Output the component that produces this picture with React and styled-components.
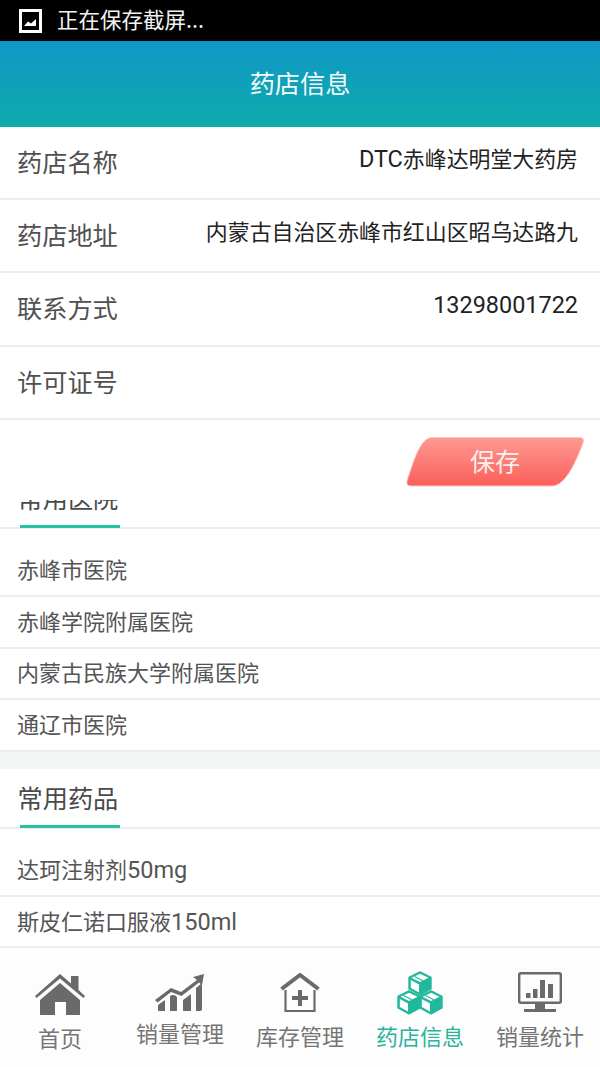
import React from "react";
import styled, { createGlobalStyle } from "styled-components";

const Global = createGlobalStyle`
  html, body { margin: 0; padding: 0; background: #fff; }
  body { font-family: "Noto Sans CJK SC", "Noto Sans", sans-serif; }
  * { box-sizing: border-box; }
`;
const Page = styled.div`
  width: 600px; height: 1067px; display: flex; flex-direction: column;
  overflow: hidden; background: #fff;
`;
const StatusBar = styled.div`
  height: 41px; flex: none; background: #000; color: #f2f2f2; display: flex;
  align-items: center; padding: 0 0 0 19px; gap: 15px; font-size: 21.5px;
  & > span { padding-bottom: 4px; }
`;
const Header = styled.header`
  height: 86px; flex: none; display: flex; align-items: center; justify-content: center;
  background: linear-gradient(180deg, #1197c6 0%, #0dabab 100%);
  color: #f4fbfb; font-size: 25.2px; padding-bottom: 4px;
`;
const Form = styled.section`flex: none; background: #fff;`;
const Row = styled.div`
  height: 73.2px; display: flex; align-items: center; justify-content: space-between;
  padding: 0 22px 0 17px; border-bottom: 2px solid #ececec;
`;
const Label = styled.span`font-size: 25.2px; color: #505050; padding-bottom: 3px;`;
const Value = styled.span`font-size: 21.9px; color: #222; padding-bottom: 11px;`;
const Latin = styled.span`font-family: Roboto, sans-serif; font-size: 1.07em;`;
const SaveBar = styled.div`
  height: 80px; flex: none; background: #fff; display: flex; justify-content: flex-end;
  padding: 17px 16px 0 0;
`;
const SaveButton = styled.button`
  position: relative; width: 178px; height: 50px; border: 0; background: none; padding: 0 0 4px;
  color: #fbeeee; font: inherit; font-size: 25px; cursor: pointer;
  & > svg { position: absolute; inset: 0; }
  & > span { position: relative; }
`;
const Scroller = styled.main`flex: 1; min-height: 0; overflow: hidden; background: #fff;`;
const Content = styled.div`margin-top: -31px;`;
const SectionTitle = styled.h2`
  margin: 0; height: 60px; padding: 10px 0 0 17.500px; position: relative; font-weight: 400;
  font-size: 25.2px; line-height: 37px; color: #4a4a4a; border-bottom: 2px solid #ececec;
  &::after {
    content: ""; position: absolute; left: 20px; bottom: -1px; width: 100px; height: 3px; background: #27c2a4;
  }
`;
const List = styled.ul`margin: 0; padding: 16.5px 0 0; list-style: none;`;
const Item = styled.li`
  height: 51.7px; padding: 0 0 4px 17px; display: flex; align-items: center; font-size: 22px;
  color: #555; border-bottom: 2px solid #ececec;
`;
const Gap = styled.div`height: 16.5px; background: #f4f6f6;`;
const TabBar = styled.nav`
  height: 118px; flex: none; display: grid; grid-template-columns: repeat(5, 120px);
  background: #fdfdfd; position: relative;
`;
const Tab = styled.div`
  display: flex; flex-direction: column; align-items: center; padding-top: ${p => p.$top}px;
  color: ${p => (p.$active ? "#2bb39c" : "#757575")}; font-size: 22px; line-height: 32px;
`;
const IconBox = styled.div`
  height: ${p => p.$h}px; display: flex; align-items: flex-start; justify-content: center; margin-bottom: ${p => p.$gap}px;
`;

const Shot = () => (
  <svg width="23" height="24" viewBox="0 0 23 24">
    <rect x="0" y="0" width="23" height="24" fill="#fff" />
    <rect x="3" y="3" width="17" height="18" fill="#000" />
    <path d="M5 17 L9 12.5 L12 14.5 L17 10 V17 Z" fill="#fff" />
  </svg>
);
const Home = () => (
  <svg width="50" height="42" viewBox="0 0 50 42" fill="#6a6a6a">
    <path d="M36 2 h7.5 v14 l6.5 6 -1.6 2 L25 4.5 1.6 24 0 22 25 0 36 9.500 Z" />
    <path d="M25 9 L45 26 V41 H31 V28 H20 V41 H5 V26 Z" />
  </svg>
);
const Chart = () => (
  <svg width="50" height="38" viewBox="0 0 50 38" fill="#6a6a6a">
    <path d="M0 26 L16 14 L26 18 L42 6 L38 3 L49 0 L47 11 L44 8.500 L26.500 22 L16 18 L2.500 28.500 Z" />
    <path d="M3 37 V31 L10 26 V37 Z M15 37 V23 Q15 21 17 21 Q22 21 22 24 V37 Z M28 37 V26 L36 20 V37 Z M41 37 V14 L47 9 V35 Q47 37 45 37 Z" />
  </svg>
);
const Store = () => (
  <svg width="40" height="40" viewBox="0 0 40 40">
    <path d="M1.500 16 L20 2 L38.500 16" fill="none" stroke="#6a6a6a" strokeWidth="4" />
    <path d="M5.500 17 V38 H34.500 V17" fill="none" stroke="#6a6a6a" strokeWidth="2.200" />
    <path d="M20 17 V33 M12 25 H28" stroke="#6a6a6a" strokeWidth="4" />
  </svg>
);
const Cube = ({ x, y }) => (
  <g transform={`translate(${x} ${y})`}>
    <path d="M11 0 L22 5.500 V17 L11 23 L0 17 V5.500 Z" fill="#22b89c" stroke="#22b89c" strokeWidth="1.400" strokeLinejoin="round" />
    <path d="M2.500 5.800 L11 1.800 L19.500 5.800 L11 10 Z" fill="#fff" />
    <path d="M1.800 8 L10 12.500 V20.500 L1.800 16 Z" fill="#fff" />
    <path d="M5.500 4.500 L14 8.800" stroke="#22b89c" strokeWidth="1.200" fill="none" />
  </g>
);
const Cubes = () => (
  <svg width="46" height="45" viewBox="0 0 46 45">
    <Cube x="12" y="1" />
    <Cube x="1" y="20" />
    <Cube x="23" y="20" />
  </svg>
);
const Monitor = () => (
  <svg width="44" height="41" viewBox="0 0 44 41" fill="#6a6a6a">
    <rect x="1.200" y="1.200" width="41.600" height="29.600" rx="1.500" fill="none" stroke="#6a6a6a" strokeWidth="2.400" />
    <path d="M8 21 h4.500 v5 H8 Z M15 17 h4.500 v9 H15 Z M22 8 h5 v18 h-5 Z M30 12 h5 v14 h-5 Z" />
    <path d="M17 32 h10 v5 h-10 Z M6 37 h32 v3 H6 Z" />
  </svg>
);

const Mixed = ({ text }) =>
  text.split(/([A-Za-z0-9]+)/).map((part, i) =>
    i % 2 ? <Latin key={i}>{part}</Latin> : part
  );

const rows = [
  ["药店名称", "DTC赤峰达明堂大药房"],
  ["药店地址", "内蒙古自治区赤峰市红山区昭乌达路九"],
  ["联系方式", "13298001722"],
  ["许可证号", ""],
];
const hospitals = ["赤峰市医院", "赤峰学院附属医院", "内蒙古民族大学附属医院", "通辽市医院"];
const drugs = ["达珂注射剂50mg", "斯皮仁诺口服液150ml"];
const tabs = [
  { label: "首页", icon: <Home />, top: 25, h: 42, gap: 5 },
  { label: "销量管理", icon: <Chart />, top: 25, h: 38, gap: 4 },
  { label: "库存管理", icon: <Store />, top: 24, h: 40, gap: 6 },
  { label: "药店信息", icon: <Cubes />, top: 22, h: 45, gap: 3, active: true },
  { label: "销量统计", icon: <Monitor />, top: 23, h: 41, gap: 6 },
];

export default function App() {
  return (
    <Page>
      <Global />
      <StatusBar><Shot /><span>正在保存截屏...</span></StatusBar>
      <Header>药店信息</Header>
      <Form>
        {rows.map(([k, v]) => (
          <Row key={k}><Label>{k}</Label><Value><Mixed text={v} /></Value></Row>
        ))}
      </Form>
      <SaveBar>
        <SaveButton>
          <svg width="178" height="50" viewBox="0 0 178 50">
            <defs>
              <linearGradient id="save" x1="0" y1="0" x2="0" y2="1">
                <stop offset="0" stopColor="#fd9a93" />
                <stop offset="1" stopColor="#fb5f59" />
              </linearGradient>
            </defs>
            <path d="M26 .5 H174 Q178.500 .5 177 6 C171 22 160 49 146 49 H5 Q0 49 1 44 C7 26 14 .5 26 .5 Z" fill="url(#save)" stroke="#fcc4bf" strokeWidth="1" />
          </svg>
          <span>保存</span>
        </SaveButton>
      </SaveBar>
      <Scroller>
        <Content>
          <section>
            <SectionTitle>常用医院</SectionTitle>
            <List>{hospitals.map(h => <Item key={h}>{h}</Item>)}</List>
          </section>
          <Gap />
          <section>
            <SectionTitle>常用药品</SectionTitle>
            <List>{drugs.map(d => <Item key={d}><span><Mixed text={d} /></span></Item>)}</List>
          </section>
        </Content>
      </Scroller>
      <TabBar>
        {tabs.map(t => (
          <Tab key={t.label} $active={t.active} $top={t.top}>
            <IconBox $h={t.h} $gap={t.gap}>{t.icon}</IconBox>
            {t.label}
          </Tab>
        ))}
      </TabBar>
    </Page>
  );
}
